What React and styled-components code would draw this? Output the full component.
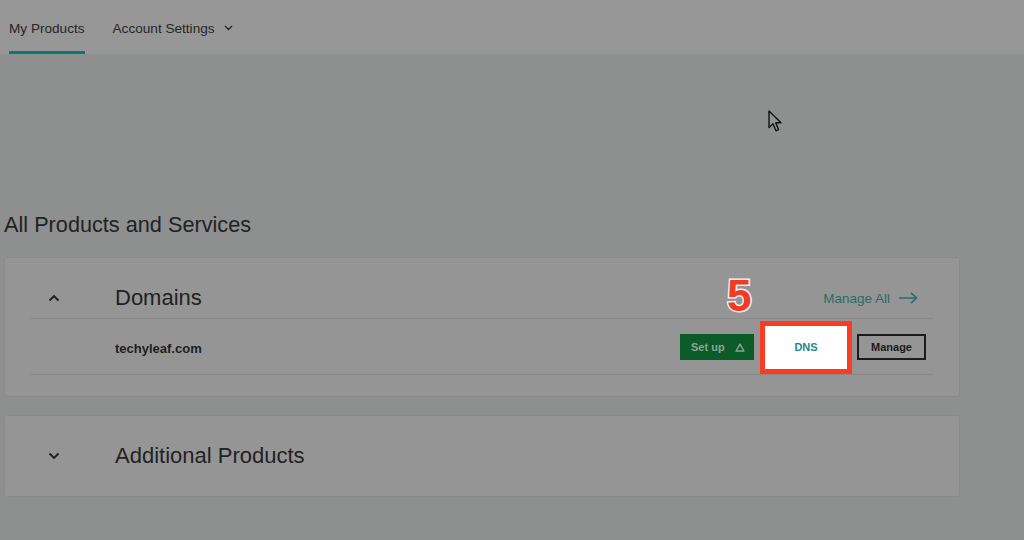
import React from "react";
import styled, { createGlobalStyle } from "styled-components";

const Global = createGlobalStyle`
  html, body { margin: 0; padding: 0; }
  body { background: #8e908f; font-family: "Liberation Sans", Arial, sans-serif; }
  * { box-sizing: border-box; }
`;

const Page = styled.div`
  position: relative;
  width: 1024px;
  height: 540px;
  overflow: hidden;
  background: #8e908f;
  color: #202020;
`;

const Nav = styled.nav`
  height: 54px;
  background: #979797;
  display: flex;
  align-items: stretch;
  gap: 28px;
  padding-left: 9px;
`;

const Tab = styled.div`
  display: flex;
  align-items: center;
  gap: 9px;
  padding-top: 5px;
  font-size: 13.6px;
  color: #262626;
  border-bottom: 3px solid ${(p) => (p.$active ? "#10786a" : "transparent")};
`;

const Main = styled.main`
  padding: 158px 64px 0 4px;
`;

const Heading = styled.h1`
  margin: 0 0 19px;
  font-size: 21.7px;
  line-height: 26px;
  font-weight: 400;
  color: #222;
`;

const Card = styled.section`
  background: #959595;
  border: 1px solid #8a8a8a;
  border-radius: 3px;
  padding: 0 26px ${(p) => (p.$open ? "21px" : "0")} 25px;
  margin-bottom: 18px;
`;

const CardHeader = styled.div`
  display: flex;
  align-items: center;
  height: ${(p) => (p.$open ? "60px" : "80px")};
  padding-top: ${(p) => (p.$open ? "20px" : "0")};
`;

const ChevronCell = styled.div`
  width: 85px;
  padding-left: 18px;
  display: flex;
  align-items: center;
`;

const Title = styled.h2`
  margin: 0;
  font-size: 22px;
  line-height: 26px;
  font-weight: 400;
  color: #222;
`;

const ManageAll = styled.a`
  margin-left: auto;
  margin-right: 15px;
  display: flex;
  align-items: center;
  gap: 9px;
  font-size: 13.5px;
  color: #2a6d66;
  text-decoration: none;
`;

const Row = styled.div`
  display: flex;
  align-items: center;
  height: 57px;
  padding: 1px 7px 0 85px;
  border-top: 1px solid #898989;
  border-bottom: 1px solid #898989;
`;

const DomainName = styled.span`
  font-size: 13px;
  font-weight: 700;
  color: #1e1e1e;
  padding-top: 2px;
`;

const Actions = styled.div`
  margin-left: auto;
  display: flex;
  align-items: center;
  gap: 5px;
`;

const Button = styled.button`
  font-family: "Liberation Sans", Arial, sans-serif;
  font-size: 11px;
  font-weight: 700;
  height: 26px;
  display: flex;
  align-items: center;
  justify-content: center;
  cursor: pointer;
  border-radius: 0;
`;

const SetUpButton = styled(Button)`
  width: 74px;
  margin-right: 1px;
  padding: 0 9px 0 11px;
  justify-content: space-between;
  background: #0d5b28;
  border: none;
  color: #8aa793;
`;

const DnsButton = styled(Button)`
  width: 92px;
  height: 53px;
  background: #ffffff;
  border: 5px solid #fb3b24;
  color: #1e8b8b;
`;

const ManageButton = styled(Button)`
  width: 69px;
  background: transparent;
  border: 2px solid #1b1b1b;
  color: #1b1b1b;
`;

const StepNumber = styled.div`
  position: absolute;
  left: 727px;
  top: 274px;
  font-family: "Liberation Sans", Arial, sans-serif;
  font-size: 44px;
  line-height: 1;
  font-weight: 700;
  color: #f43a24;
  -webkit-text-stroke: 3px #f2f2f2;
  paint-order: stroke fill;
`;

const Pointer = styled.svg`
  position: absolute;
  left: 768px;
  top: 110px;
`;

const Chevron = ({ up }) => (
  <svg width="12" height="8" viewBox="0 0 12 8">
    <path
      d={up ? "M1.5 6.5 L6 2 L10.5 6.5" : "M1.5 1.5 L6 6 L10.5 1.5"}
      fill="none"
      stroke="#1e1e1e"
      strokeWidth="1.8"
    />
  </svg>
);

const SmallChevron = () => (
  <svg width="9" height="6" viewBox="0 0 9 6">
    <path d="M1 1 L4.5 4.5 L8 1" fill="none" stroke="#262626" strokeWidth="1.4" />
  </svg>
);

const Arrow = () => (
  <svg width="19" height="12" viewBox="0 0 19 12">
    <path d="M0 6 H17.5 M12 0.8 L17.5 6 L12 11.2" fill="none" stroke="#2a6d66" strokeWidth="1.6" />
  </svg>
);

const Triangle = () => (
  <svg width="10" height="9" viewBox="0 0 10 9">
    <path d="M5 1.2 L9 8 L1 8 Z" fill="none" stroke="#8aa793" strokeWidth="1.4" strokeLinejoin="round" />
  </svg>
);

export default function App() {
  return (
    <Page>
      <Global />
      <Nav>
        <Tab $active>My Products</Tab>
        <Tab>
          Account Settings <SmallChevron />
        </Tab>
      </Nav>
      <Main>
        <Heading>All Products and Services</Heading>
        <Card $open>
          <CardHeader $open>
            <ChevronCell>
              <Chevron up />
            </ChevronCell>
            <Title>Domains</Title>
            <ManageAll href="#">
              Manage All <Arrow />
            </ManageAll>
          </CardHeader>
          <Row>
            <DomainName>techyleaf.com</DomainName>
            <Actions>
              <SetUpButton>
                Set up <Triangle />
              </SetUpButton>
              <DnsButton>DNS</DnsButton>
              <ManageButton>Manage</ManageButton>
            </Actions>
          </Row>
        </Card>
        <Card>
          <CardHeader>
            <ChevronCell>
              <Chevron />
            </ChevronCell>
            <Title>Additional Products</Title>
          </CardHeader>
        </Card>
      </Main>
      <StepNumber>5</StepNumber>
      <Pointer width="16" height="23" viewBox="0 0 16 23">
        <path
          d="M1 1 L1 17.5 L5 13.8 L8 20.8 L10.6 19.7 L7.7 12.8 L13 12.8 Z"
          fill="#939393"
          stroke="#111"
          strokeWidth="1.4"
          strokeLinejoin="round"
        />
      </Pointer>
    </Page>
  );
}
